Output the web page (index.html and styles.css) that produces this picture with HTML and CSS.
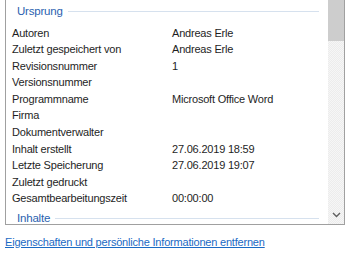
FILE: index.html
```html
<!DOCTYPE html>
<html lang="de">
<head>
    <meta charset="UTF-8">
    <meta name="viewport" content="width=device-width, initial-scale=1.0">
    <title>Eigenschaften</title>
    <link rel="stylesheet" href="styles.css">
</head>
<body>
    <div class="panel">
        <div class="props">
            <div class="group-title"><span>Ursprung</span></div>
            <div class="prop-row"><span class="prop-name">Autoren</span><span class="prop-value">Andreas Erle</span></div>
            <div class="prop-row"><span class="prop-name">Zuletzt gespeichert von</span><span class="prop-value">Andreas Erle</span></div>
            <div class="prop-row"><span class="prop-name">Revisionsnummer</span><span class="prop-value">1</span></div>
            <div class="prop-row"><span class="prop-name">Versionsnummer</span><span class="prop-value"></span></div>
            <div class="prop-row"><span class="prop-name">Programmname</span><span class="prop-value">Microsoft Office Word</span></div>
            <div class="prop-row"><span class="prop-name">Firma</span><span class="prop-value"></span></div>
            <div class="prop-row"><span class="prop-name">Dokumentverwalter</span><span class="prop-value"></span></div>
            <div class="prop-row"><span class="prop-name">Inhalt erstellt</span><span class="prop-value">27.06.2019 18:59</span></div>
            <div class="prop-row"><span class="prop-name">Letzte Speicherung</span><span class="prop-value">27.06.2019 19:07</span></div>
            <div class="prop-row"><span class="prop-name">Zuletzt gedruckt</span><span class="prop-value"></span></div>
            <div class="prop-row"><span class="prop-name">Gesamtbearbeitungszeit</span><span class="prop-value">00:00:00</span></div>
            <div class="group-title"><span>Inhalte</span></div>
        </div>
        <div class="scrollbar">
            <div class="thumb"></div>
            <div class="track"></div>
            <div class="arrow">
                <svg width="9" height="6" viewBox="0 0 9 6">
                    <path d="M1 1 L4.5 4.5 L8 1" fill="none" stroke="#606060" stroke-width="1.4"/>
                </svg>
            </div>
        </div>
    </div>
    <a class="remove-link" href="#">Eigenschaften und persönliche Informationen entfernen</a>
</body>
</html>
```

FILE: styles.css
```css
* {
    margin: 0;
    padding: 0;
    box-sizing: border-box;
}

body {
    background: #ffffff;
    font-family: 'Liberation Sans', Arial, sans-serif;
    font-size: 11px;
    letter-spacing: -0.2px;
    color: #1e1e1e;
}

.panel {
    display: flex;
    width: 340px;
    height: 225px;
    margin-left: 5px;
    border: 1px solid #a0a0a0;
    border-top: none;
    overflow: hidden;
}

.props {
    flex: 1;
    padding-left: 6px;
    padding-right: 9px;
    overflow: hidden;
}

.group-title {
    display: flex;
    align-items: center;
    gap: 5px;
    height: 16.5px;
    line-height: 16.5px;
    margin: 3px 0 5.25px;
    padding-left: 5px;
    color: #2a5fb0;
    font-size: 11.5px;
}

.group-title::after {
    content: '';
    flex: 1;
    height: 1px;
    background: #d6e1ee;
}

.prop-row {
    display: flex;
    height: 16.55px;
    line-height: 16.55px;
}

.prop-name {
    width: 160px;
}

.prop-value {
    flex: 1;
}

.scrollbar {
    width: 16px;
    display: flex;
    flex-direction: column;
    background: repeating-conic-gradient(#ececec 0 25%, #f6f6f6 0 50%) 0 0 / 2px 2px;
}

.thumb {
    height: 41px;
    background: #cdcdcd;
}

.track {
    flex: 1;
}

.arrow {
    height: 17px;
    display: flex;
    align-items: center;
    justify-content: center;
    padding-bottom: 2px;
}

.remove-link {
    display: inline-block;
    margin: 10.5px 0 0 5px;
    color: #1a6ac4;
}
```
